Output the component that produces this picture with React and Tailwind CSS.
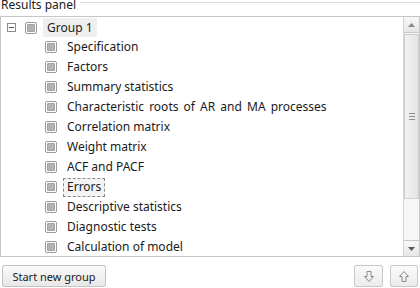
import React from 'react';

const items = [
  'Specification',
  'Factors',
  'Summary statistics',
  'Characteristic roots of AR and MA processes',
  'Correlation matrix',
  'Weight matrix',
  'ACF and PACF',
  'Errors',
  'Descriptive statistics',
  'Diagnostic tests',
  'Calculation of model',
];

const Check = () => (
  <span className="w-[12px] h-[12px] shrink-0 rounded-[2px] border border-[#9a9a9a] bg-white p-[1px] flex">
    <span className="flex-1 rounded-[1px] bg-[#b4b4b4] border border-[#a0a0a0]" />
  </span>
);

const Arrow = ({ up }) => (
  <svg width="12" height="13" viewBox="0 0 12 13">
    <path
      d={up ? 'M6 1.5 L10.5 6.5 L8 6.5 L8 11.5 L4 11.5 L4 6.5 L1.5 6.5 Z' : 'M6 11.5 L10.5 6.5 L8 6.5 L8 1.5 L4 1.5 L4 6.5 L1.5 6.5 Z'}
      fill="none"
      stroke="#8a8a8a"
      strokeWidth="1"
      strokeLinejoin="round"
    />
  </svg>
);

export default function App() {
  return (
    <div className="w-[420px] h-[288px] bg-white overflow-hidden flex flex-col text-[12px] text-[#1a1a1a]" style={{ fontFamily: '"Noto Sans", "Open Sans", sans-serif' }}>
      {/* Title */}
      <div className="h-[16px] flex items-center -mt-[6px]">
        <span className="pl-[1px] pr-[4px] leading-none text-[12px] mt-[6px]">Results panel</span>
        <div className="flex-1 h-px bg-[#dadada]" />
      </div>

      {/* Tree panel */}
      <div className="mt-[6px] h-[241px] border border-[#c6c6c6] flex">
        <div className="flex-1 flex flex-col pt-[1px] overflow-hidden">
          <div className="h-[20px] flex items-center">
            <span className="ml-[6px] w-[9px] h-[9px] border border-[#8c8c8c] flex items-center justify-center">
              <span className="w-[5px] h-px bg-[#555]" />
            </span>
            <span className="ml-[9px]"><Check /></span>
            <span className="ml-[6px] h-[19px] px-[4px] bg-[#efefef] flex items-center">Group 1</span>
          </div>
          {items.map((t) => (
            <div key={t} className="h-[20px] flex items-center shrink-0">
              <span className="ml-[44px]"><Check /></span>
              {t === 'Errors' ? (
                <span className="ml-[6px] h-[19px] px-[3px] border border-dashed border-[#8a8a8a] bg-[#f4f4f4] flex items-center">{t}</span>
              ) : (
                <span className={'ml-[10px] whitespace-nowrap' + (t.startsWith('Characteristic') ? ' [word-spacing:2px]' : '')}>{t}</span>
              )}
            </div>
          ))}
        </div>

        {/* Scrollbar */}
        <div className="w-[16px] flex flex-col bg-[#f6f6f6] border-l border-[#d4d4d4]">
          <div className="h-[16px] border-b border-[#c8c8c8] bg-gradient-to-b from-[#f8f8f8] to-[#e6e6e6] flex items-center justify-center">
            <svg width="7" height="4" viewBox="0 0 7 4"><path d="M3.5 0 L7 4 L0 4 Z" fill="#8a8a8a" /></svg>
          </div>
          <div className="h-[165px] mt-[1px] border border-[#cfcfcf] bg-gradient-to-r from-[#f2f2f2] to-[#e4e4e4] flex flex-col items-center justify-center gap-[2px]">
            <span className="w-[6px] h-px bg-[#909090]" />
            <span className="w-[6px] h-px bg-[#909090]" />
            <span className="w-[6px] h-px bg-[#909090]" />
          </div>
          <div className="flex-1" />
          <div className="h-[16px] border-t border-[#c8c8c8] bg-gradient-to-b from-[#f8f8f8] to-[#e6e6e6] flex items-center justify-center">
            <svg width="7" height="4" viewBox="0 0 7 4"><path d="M0 0 L7 0 L3.5 4 Z" fill="#5a5a5a" /></svg>
          </div>
        </div>
      </div>

      {/* Bottom buttons */}
      <div className="flex items-center mt-[8px] px-[2px]">
        <button className="h-[22px] w-[104px] border border-[#c4c4c4] rounded-[2px] bg-gradient-to-b from-[#fafafa] to-[#e8e8e8] text-[11px] text-[#1a1a1a] leading-none flex items-center justify-center">Start new group</button>
        <div className="flex-1" />
        <button className="w-[29px] h-[22px] border border-[#c8c8c8] rounded-[2px] bg-gradient-to-b from-[#fafafa] to-[#ececec] flex items-center justify-center"><Arrow /></button>
        <button className="ml-[7px] w-[28px] h-[22px] border border-[#c8c8c8] rounded-[2px] bg-gradient-to-b from-[#fafafa] to-[#ececec] flex items-center justify-center"><Arrow up /></button>
      </div>
    </div>
  );
}
